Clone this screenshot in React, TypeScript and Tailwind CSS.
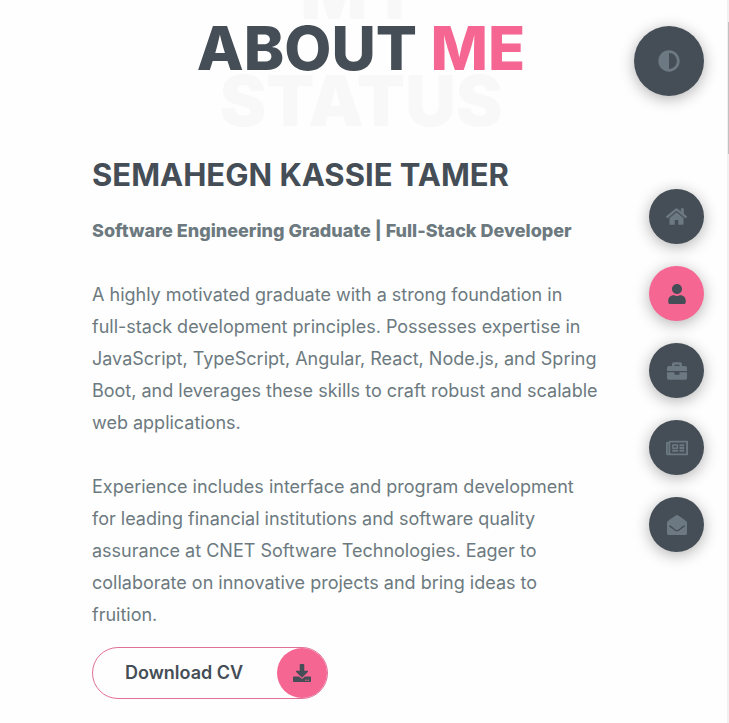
import React from "react";
import {
  FaAdjust,
  FaBriefcase,
  FaDownload,
  FaEnvelopeOpen,
  FaHome,
  FaRegNewspaper,
  FaUser,
} from "react-icons/fa";

const links = [
  { label: "Home", Icon: FaHome, size: 21, active: false },
  { label: "About", Icon: FaUser, size: 20, active: true },
  { label: "Portfolio", Icon: FaBriefcase, size: 20, active: false },
  { label: "Blog", Icon: FaRegNewspaper, size: 22, active: false },
  { label: "Contact", Icon: FaEnvelopeOpen, size: 20, active: false },
];

function Title() {
  return (
    <header className="relative pt-[10px] text-center uppercase">
      <div
        aria-hidden="true"
        className="absolute inset-x-0 -top-[60px] text-[70px] leading-[107px] font-black text-[#f8f8f8]"
      >
        <div>My</div>
        <div>Status</div>
      </div>
      <h1 className="relative text-[61px] leading-[76px] font-extrabold whitespace-nowrap text-[#454e56]">
        About <span className="text-[#f56692]">me</span>
      </h1>
    </header>
  );
}

function Controls() {
  return (
    <aside className="flex w-[97px] shrink-0 flex-col items-end gap-[93px] pt-[26px] pr-[23px]">
      <button
        type="button"
        aria-label="Toggle theme"
        className="flex size-[70px] shrink-0 items-center justify-center rounded-full bg-[#454e56] text-[#6c7983] shadow-[0_3px_15px_rgba(0,0,0,0.3)]"
      >
        <FaAdjust size={22} />
      </button>
      <nav className="flex flex-col gap-[22px]">
        {links.map(({ label, Icon, size, active }) => (
          <a
            key={label}
            href="#"
            aria-label={label}
            className={
              "flex size-[55px] items-center justify-center rounded-full shadow-[0_3px_15px_rgba(0,0,0,0.3)] " +
              (active ? "bg-[#f56692] text-[#454e56]" : "bg-[#454e56] text-[#6c7983]")
            }
          >
            <Icon size={size} />
          </a>
        ))}
      </nav>
    </aside>
  );
}

export default function App() {
  return (
    <div className="flex min-h-screen overflow-hidden bg-[#fefefe] font-['Inter',sans-serif]">
      <main className="min-w-0 flex-1 pb-6 pl-[92px]">
        <Title />
        <section className="pt-[69px] text-[18px] leading-8 text-[#6c7a80]">
          <h2 className="text-[31px] leading-10 font-bold whitespace-nowrap text-[#454e56]">
            SEMAHEGN KASSIE TAMER
          </h2>
          <h3 className="mt-5 font-extrabold whitespace-nowrap">
            Software Engineering Graduate | Full-Stack Developer
          </h3>
          <p className="mt-8 whitespace-nowrap">
            A highly motivated graduate with a strong foundation in
            <br />
            full-stack development principles. Possesses expertise in
            <br />
            JavaScript, TypeScript, Angular, React, Node.js, and Spring
            <br />
            Boot, and leverages these skills to craft robust and scalable
            <br />
            web applications.
          </p>
          <p className="mt-8 whitespace-nowrap">
            Experience includes interface and program development
            <br />
            for leading financial institutions and software quality
            <br />
            assurance at CNET Software Technologies. Eager to
            <br />
            collaborate on innovative projects and bring ideas to
            <br />
            fruition.
          </p>
          <a
            href="#"
            className="mt-4 inline-flex h-[52px] items-center rounded-full border border-[#e0709a] pl-8 font-semibold text-[#454e56]"
          >
            <span className="pr-[34px]">Download CV</span>
            <span className="flex size-[50px] items-center justify-center rounded-full bg-[#f56692]">
              <FaDownload size={18} />
            </span>
          </a>
        </section>
      </main>
      <Controls />
      <div aria-hidden="true" className="w-[2px] shrink-0 bg-[#f1f1f1] pt-[22px]">
        <div className="ml-px h-[132px] bg-[#c1c1c1]" />
      </div>
    </div>
  );
}
